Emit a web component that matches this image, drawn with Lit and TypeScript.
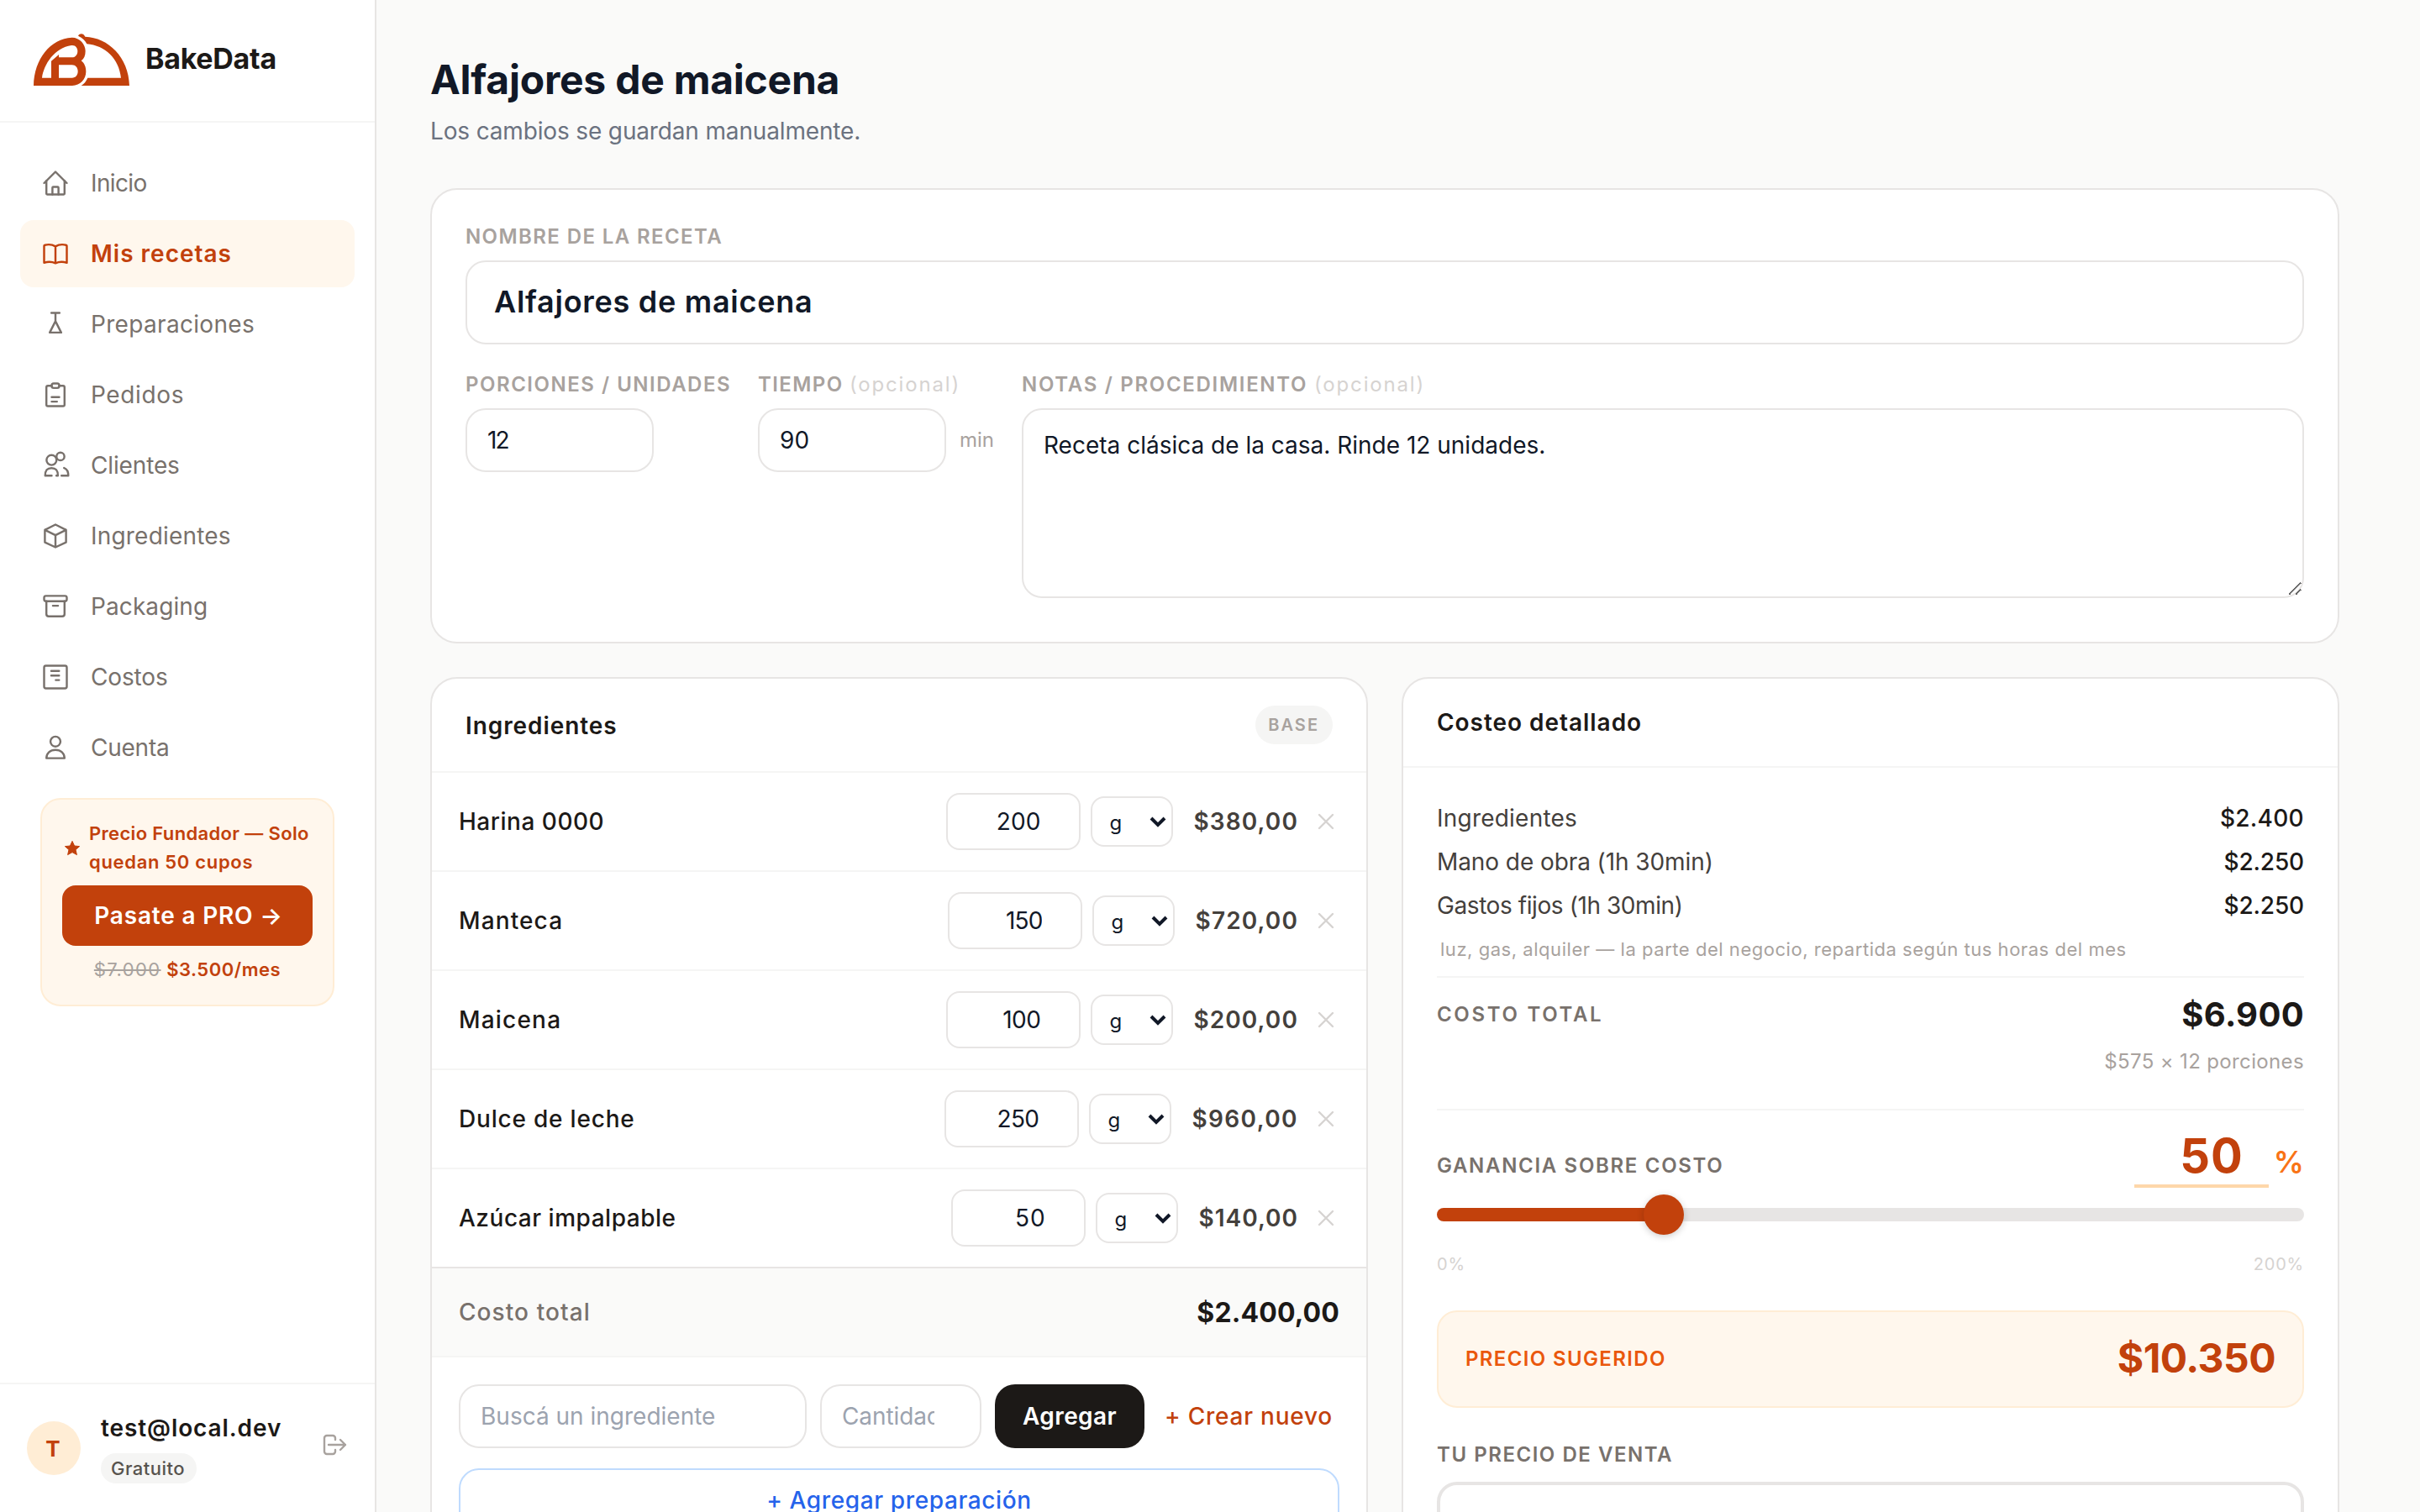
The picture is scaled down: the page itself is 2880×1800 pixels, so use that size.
import { LitElement, html, css, svg } from "lit";
import { customElement } from "lit/decorators.js";

const icons: Record<string, unknown> = {
  home: svg`<path d="M2.5 10 10 2.5l7.5 7.5"/><path d="M4 8.5V17a.5.5 0 0 0 .5.5h11a.5.5 0 0 0 .5-.5V8.5"/><path d="M8 17.5V13a.5.5 0 0 1 .5-.5h3a.5.5 0 0 1 .5.5v4.500"/>`,
  book: svg`<path d="M10 5.200C8 4 5 3.800 3 4.300a.6.6 0 0 0-.5.6V16c2.500-.8 5.500-.6 7.500.3 2-.9 5-1.100 7.500-.3V4.900a.6.6 0 0 0-.5-.6c-2-.5-5-.3-7 .9zM10 5.200v11"/>`,
  flask: svg`<path d="M7.300 2.500h5.400M10 2.500V8M10 8l-3.800 7.500h7.600z"/>`,
  clipboard: svg`<path d="M7.500 4H5a1 1 0 0 0-1 1v11.500a1 1 0 0 0 1 1h10a1 1 0 0 0 1-1V5a1 1 0 0 0-1-1h-2.500"/><rect x="7.500" y="2.500" width="5" height="3" rx="1.300"/><path d="M7.500 11.500h5M7.500 14.500h3.500"/>`,
  users: svg`<circle cx="7.400" cy="6.500" r="3.300"/><circle cx="13.300" cy="4.100" r="2.600"/><path d="M7.500 16.800H3.200c0-3.500 1-5 4.200-5s4.200 1.500 4.200 5h-1M15.700 11.700c1.800.6 2.800 2 2.800 5.100h-4.500"/>`,
  box: svg`<path d="m10 2.500 7 3.500v8.200l-7 3.300-7-3.300V6zM3 6l7 3.500L17 6M10 9.500v8"/>`,
  archive: svg`<rect x="2.500" y="3" width="15" height="3.500" rx="1.200"/><path d="M4 6.500V15a1.500 1.500 0 0 0 1.500 1.500h9A1.500 1.500 0 0 0 16 15V6.500M8.300 9.500h3.400"/>`,
  costs: svg`<rect x="2.500" y="2.500" width="15" height="15" rx="1.200"/><path d="M7.200 6h5.200M7.200 9h5.200M10.200 12h2.200"/>`,
  user: svg`<circle cx="10" cy="6" r="3.300"/><path d="M4 17c.1-3.300 2.500-5.500 6-5.500s5.900 2.200 6 5.500z"/>`,
};

/* The last value of each entry is the letter spacing in px. */
const nav: [string, string, number][] = [
  ["home", "Inicio", -0.32],
  ["book", "Mis recetas", 0.5],
  ["flask", "Preparaciones", 0.16],
  ["clipboard", "Pedidos", 0.32],
  ["users", "Clientes", -0.07],
  ["box", "Ingredientes", 0.1],
  ["archive", "Packaging", 0.05],
  ["costs", "Costos", -0.07],
  ["user", "Cuenta", -0.12],
];

const rows: [string, number, string, number, string, number][] = [
  ["Harina 0000", 0.26, "200", 0.07, "$380,00", 0.55],
  ["Manteca", 0.56, "150", -0.4, "$720,00", 0.56],
  ["Maicena", 0.6, "100", -0.25, "$200,00", 0.55],
  ["Dulce de leche", 0.4, "250", -0.3, "$960,00", 0.7],
  ["Azúcar impalpable", 0.26, "50", 0.45, "$140,00", 0.5],
];

const costs: [string, number, string, number][] = [
  ["Ingredientes", 0.11, "$2.400", 0.14],
  ["Mano de obra (1h 30min)", -0.04, "$2.250", -0.08],
  ["Gastos fijos (1h 30min)", -0.21, "$2.250", -0.08],
];

const sp = (n: number) => `letter-spacing:${n}px`;

@customElement("app-root")
export class AppRoot extends LitElement {
  static styles = css`
    :host { display: block; width: 2880px; height: 1800px; overflow: hidden; background: #fafaf9; }
    * { box-sizing: border-box; }
    input, select, textarea, button { font-family: inherit; font-size: 14px; color: #111827; margin: 0; outline: none; }
    .page { display: flex; width: 1440px; height: 900px; overflow: hidden; transform: scale(2); transform-origin: 0 0; font: 14px/20px Inter, sans-serif; color: #1c1917; background: #fafaf9; }

    .side { width: 224px; height: 900px; flex: none; display: flex; flex-direction: column; background: #fff; border-right: 1px solid #e7e5e4; }
    .brand { height: 73px; flex: none; display: flex; align-items: flex-start; gap: 9.5px; padding: 20px; border-bottom: 1px solid #f5f5f4; }
    .brand svg { display: block; width: 57px; height: 31px; }
    .brand-name { font-size: 17px; font-weight: 700; line-height: 30px; letter-spacing: -0.14px; }
    .nav { flex: 1; padding: 16px 12px; display: flex; flex-direction: column; gap: 2px; }
    .item { height: 40px; flex: none; display: flex; align-items: center; gap: 12px; padding: 0 12px; border-radius: 8px; color: #78716c; }
    .item.on { background: #fff7ed; color: #c2410c; font-weight: 600; }
    .ico { width: 18px; height: 18px; flex: none; fill: none; stroke: currentColor; stroke-width: 1.35; stroke-linecap: round; stroke-linejoin: round; }
    .promo { margin: 8px 12px 0; padding: 12px; border: 1px solid #ffedd5; border-radius: 12px; background: #fff7ed; font-size: 11px; line-height: 16.5px; color: #c2410c; font-weight: 600; }
    .promo-top { display: flex; align-items: center; gap: 4px; margin-bottom: 6px; white-space: nowrap; }
    .promo-top svg { width: 12px; height: 12px; flex: none; fill: #c2410c; stroke: #c2410c; stroke-width: 0.5; stroke-linejoin: round; }
    .promo-a { letter-spacing: 0.17px; }
    .promo-b { letter-spacing: 0.34px; }
    .promo-btn { height: 36px; padding-left: 1.5px; border-radius: 8px; background: #c2410c; color: #fff; font-size: 14px; line-height: 36px; text-align: center; letter-spacing: 0.4px; margin-bottom: 6px; }
    .promo-price { text-align: center; letter-spacing: 0.26px; }
    .old { color: #a8a29e; font-weight: 400; text-decoration: line-through; letter-spacing: 0.7px; margin-right: 0.3px; }
    .user { height: 77px; flex: none; border-top: 1px solid #f5f5f4; padding: 16px; display: flex; gap: 12px; align-items: flex-start; }
    .avatar { width: 32px; height: 32px; margin-top: 6px; padding-right: 1px; border-radius: 50%; background: #ffedd5; color: #c2410c; font-size: 13px; font-weight: 700; line-height: 32px; text-align: center; }
    .who { flex: 1; }
    .mail { font-weight: 600; line-height: 20px; height: 21px; margin-bottom: 4px; letter-spacing: 0.45px; }
    .plan { display: block; width: 57px; padding: 0 6px; height: 18px; border-radius: 9px; background: #f5f5f4; color: #57534e; font-size: 11px; line-height: 18px; font-weight: 500; letter-spacing: 0.24px; }
    .out { width: 16px; height: 16px; margin-top: 12px; color: #a8a29e; fill: none; stroke: currentColor; stroke-width: 1.2; stroke-linecap: round; stroke-linejoin: round; }

    .main { width: 1200px; padding: 32px; flex: none; }
    h1 { margin: 0 0 4px; font-size: 24px; line-height: 32px; font-weight: 700; color: #111827; letter-spacing: -0.12px; }
    .sub { color: #6b7280; margin-bottom: 24px; letter-spacing: -0.076px; }
    .card { background: #fff; border: 1px solid #e7e5e4; border-radius: 16px; }
    .recipe { height: 271px; padding: 20px; margin-bottom: 20px; }
    .label { display: block; font-size: 12px; line-height: 16px; font-weight: 600; letter-spacing: 0.7px; color: #a8a29e; white-space: nowrap; margin-bottom: 6px; }
    .label span { font-weight: 400; color: #d6d3d1; letter-spacing: 0.92px; }
    .label.portions { letter-spacing: 0.76px; }
    .label.notes { letter-spacing: 0.85px; }
    .field { display: block; height: 38px; padding: 0 12px 1px; border: 1px solid #e7e5e4; border-radius: 12px; background: #fff; line-height: 20px; }
    .field::placeholder { color: #9ca3af; opacity: 1; }
    .name { width: 100%; height: 50px; padding: 0 16px 2px; font-size: 18px; font-weight: 600; margin-bottom: 16px; letter-spacing: 0.36px; }
    .trio { display: flex; gap: 16px; }
    .c1 { width: 158px; }
    .c2 { width: 141px; }
    .short { width: 112px; }
    .portions-in { letter-spacing: -1px; }
    .with-unit { display: flex; align-items: center; gap: 8px; font-size: 12px; color: #a8a29e; }
    .with-unit .field { letter-spacing: 0.1px; flex: none; }
    .grow { flex: 1; min-width: 0; }
    textarea.field { width: 100%; height: 113px; padding: 10px 12px; line-height: 22.75px; resize: vertical; letter-spacing: 0; }

    .cols { display: grid; grid-template-columns: 558px 558px; gap: 20px; }
    .ing, .cost { height: 560px; }
    .ing-head { height: 55.5px; padding: 16px 20px; display: flex; justify-content: space-between; align-items: center; border-bottom: 1px solid #f5f5f4; font-weight: 600; letter-spacing: 0.46px; }
    .ing-title { padding-top: 1px; }
    .tag { height: 22.5px; padding: 0 8px; border-radius: 12px; background: #f5f5f4; color: #a8a29e; font-size: 10px; line-height: 23px; font-weight: 600; letter-spacing: 1px; }
    .row { height: 59px; padding: 0 17px 0 16px; display: flex; align-items: center; border-bottom: 1px solid #f5f5f4; font-weight: 500; }
    .row.last { height: 58px; border-bottom: 0; }
    .qty { width: 80px; height: 34px; padding: 0 8px; border-radius: 8px; text-align: right; margin-right: 6px; }
    .unit { width: 49px; height: 30px; border: 1px solid #e7e5e4; border-radius: 8px; background: #fff; font-size: 12px; padding: 0 4px 0 6px; margin: 1px 12px 0 0; }
    .price { font-weight: 600; color: #44403c; margin-right: 9.5px; }
    .x { width: 14px; height: 14px; fill: none; stroke: #d6d3d1; stroke-width: 1.2; stroke-linecap: round; }
    .total { height: 54px; padding: 0 16px; display: flex; justify-content: space-between; align-items: center; background: #fafaf9; border-top: 1px solid #e7e5e4; border-bottom: 1px solid #f5f5f4; }
    .total-l { color: #78716c; font-weight: 500; letter-spacing: 0.54px; }
    .total-v { font-size: 16px; line-height: 24px; font-weight: 700; letter-spacing: 0.06px; }
    .add { padding: 16px; }
    .add-row { display: flex; gap: 8px; margin-bottom: 12px; }
    .search { letter-spacing: 0; }
    .cant { width: 96px; letter-spacing: -0.05px; }
    .btn-add { height: 38px; width: 89px; border: 0; border-radius: 12px; background: #1c1917; color: #fff; font-weight: 600; padding: 0; letter-spacing: 0.2px; }
    .btn-new { width: 108px; text-align: center; line-height: 38px; color: #c2410c; font-weight: 500; white-space: nowrap; letter-spacing: 0.38px; }
    .btn-prep { display: block; width: 100%; height: 38px; border: 1px solid #bfdbfe; border-radius: 12px; background: #fff; color: #2563eb; font-weight: 500; letter-spacing: 0.31px; }

    .cost-head { height: 53px; padding: 16px 20px; border-bottom: 1px solid #f5f5f4; font-weight: 600; letter-spacing: 0.48px; }
    .cost-body { padding: 20px; }
    .line { display: flex; justify-content: space-between; color: #44403c; margin-bottom: 6px; }
    .line b { color: #1c1917; font-weight: 500; }
    .hint { font-size: 11px; line-height: 16.5px; color: #a8a29e; padding: 2px 0 7.5px 2px; border-bottom: 1px solid #f5f5f4; letter-spacing: 0.268px; white-space: nowrap; }
    .cap { font-size: 12px; line-height: 16px; font-weight: 600; letter-spacing: 0.68px; color: #78716c; }
    .cap.ct { letter-spacing: 1.34px; }
    .cap.gc { letter-spacing: 0.84px; }
    .cap.pv { letter-spacing: 0.77px; }
    .sum { display: flex; justify-content: space-between; align-items: center; padding-top: 8px; }
    .sum b { font-size: 20px; line-height: 28px; font-weight: 700; letter-spacing: 0.16px; }
    .per { font-size: 12px; line-height: 16px; color: #a8a29e; text-align: right; padding: 6px 0 20px; border-bottom: 1px solid #f5f5f4; height: 43px; letter-spacing: 0.18px; }
    .gain { display: flex; justify-content: space-between; align-items: baseline; padding-top: 10px; height: 46px; }
    .gain-r { display: flex; align-items: baseline; gap: 3px; font-size: 18px; line-height: 34px; font-weight: 600; color: #f97316; }
    .pct { width: 80px; height: 36px; padding: 0 0 1px; border: 0; border-bottom: 2px solid #fed7aa; background: transparent; text-align: right; font-size: 28px; font-weight: 700; color: #c2410c; letter-spacing: 0.5px; }
    .range { display: block; width: 100%; height: 8px; margin-top: 12px; border-radius: 4px; appearance: none; -webkit-appearance: none; background: linear-gradient(to right, #c2410c 25%, #e7e5e4 25%); }
    .range::-webkit-slider-thumb { -webkit-appearance: none; width: 24px; height: 24px; border-radius: 50%; background: #c2410c; box-shadow: 0 1px 4px rgba(0, 0, 0, 0.2); }
    .ends { display: flex; justify-content: space-between; margin-top: 17.5px; font-size: 10px; line-height: 15px; color: #d6d3d1; letter-spacing: 0.4px; }
    .sug { height: 58px; margin: 20px 0; padding: 0 16px; display: flex; align-items: center; justify-content: space-between; border: 1px solid #ffedd5; border-radius: 12px; background: #fff7ed; }
    .sug .cap { color: #ea580c; }
    .sug b { font-size: 24px; line-height: 32px; color: #c2410c; letter-spacing: -0.28px; }
    .sell { height: 60px; margin-top: 8px; border: 2px solid #e7e5e4; border-radius: 12px; }
  `;

  private icon(name: string) {
    return html`<svg class="ico" viewBox="0 0 20 20">${icons[name]}</svg>`;
  }

  render() {
    return html`<div class="page">
      <aside class="side">
        <div class="brand">
          <svg viewBox="0 0 342 186" fill="#c2410c" fill-rule="evenodd">
            <path d="M0 186C2 90 60 18 137 14c28 0 48 24 48 48 0 16-5 28-15 35 12 9 17 23 17 39 0 27-21 50-49 50zM30 158h33V98l27-23v10h47c11 0 20-9 20-23 0-10-7-22-22-20C75 50 36 110 30 158zM90 112v46h47c13 0 21-10 21-23s-8-23-21-23z"/>
            <path d="M159 8C165-2 178-2 184 11 266 14 340 84 342 186H170c10-6 18-16 23-28h119C305 90 255 42 190 37 184 25 175 15 159 8z"/>
          </svg>
          <div class="brand-name">BakeData</div>
        </div>
        <nav class="nav">
          ${nav.map(([i, t, s]) => html`<div class="item ${t === "Mis recetas" ? "on" : ""}">${this.icon(i)}<span style=${sp(s)}>${t}</span></div>`)}
          <div class="promo">
            <div class="promo-top">
              <svg viewBox="0 0 12 12"><path d="m6 1.700 1.300 2.800 3 .3-2.300 2 .7 3L6 8.300 3.300 9.800l.7-3-2.300-2 3-.3z"/></svg>
              <div><div class="promo-a">Precio Fundador — Solo</div><div class="promo-b">quedan 50 cupos</div></div>
            </div>
            <div class="promo-btn">Pasate a PRO →</div>
            <div class="promo-price"><span class="old">$7.000</span> $3.500/mes</div>
          </div>
        </nav>
        <div class="user">
          <div class="avatar">T</div>
          <div class="who"><div class="mail">test@local.dev</div><span class="plan">Gratuito</span></div>
          <svg class="out" viewBox="0 0 16 16"><path d="M8.500 5V4A1.500 1.500 0 0 0 7 2.500H3.500A1.500 1.500 0 0 0 2 4v8a1.500 1.500 0 0 0 1.500 1.500H7A1.500 1.500 0 0 0 8.500 12v-1M4.500 8h10M11.500 5l3 3-3 3"/></svg>
        </div>
      </aside>
      <main class="main">
        <h1>Alfajores de maicena</h1>
        <div class="sub">Los cambios se guardan manualmente.</div>
        <section class="card recipe">
          <label class="label">NOMBRE DE LA RECETA</label>
          <input class="field name" .value=${"Alfajores de maicena"} />
          <div class="trio">
            <div class="c1"><label class="label portions">PORCIONES / UNIDADES</label><input class="field short portions-in" type="number" .value=${"12"} /></div>
            <div class="c2"><label class="label">TIEMPO <span>(opcional)</span></label>
              <div class="with-unit"><input class="field short" type="number" .value=${"90"} />min</div></div>
            <div class="grow"><label class="label notes">NOTAS / PROCEDIMIENTO <span>(opcional)</span></label>
              <textarea class="field" .value=${"Receta clásica de la casa. Rinde 12 unidades."}></textarea></div>
          </div>
        </section>
        <div class="cols">
          <section class="card ing">
            <div class="ing-head"><span class="ing-title">Ingredientes</span><span class="tag">BASE</span></div>
            ${rows.map(([n, ns, q, qs, p, ps], i) => html`<div class="row ${i === rows.length - 1 ? "last" : ""}">
              <span class="grow" style=${sp(ns)}>${n}</span>
              <input class="field qty" type="number" style=${sp(qs)} .value=${q} />
              <select class="unit"><option>g</option></select>
              <span class="price" style=${sp(ps)}>${p}</span>
              <svg class="x" viewBox="0 0 14 14"><path d="m3 3 8 8M11 3l-8 8"/></svg>
            </div>`)}
            <div class="total"><span class="total-l">Costo total</span><span class="total-v">$2.400,00</span></div>
            <div class="add">
              <div class="add-row">
                <input class="field grow search" placeholder="Buscá un ingrediente" />
                <input class="field cant" type="number" placeholder="Cantidad" />
                <button class="btn-add">Agregar</button>
                <span class="btn-new">+ Crear nuevo</span>
              </div>
              <button class="btn-prep">+ Agregar preparación</button>
            </div>
          </section>
          <section class="card cost">
            <div class="cost-head">Costeo detallado</div>
            <div class="cost-body">
              ${costs.map(([l, ls, v, vs]) => html`<div class="line"><span style=${sp(ls)}>${l}</span><b style=${sp(vs)}>${v}</b></div>`)}
              <div class="hint">luz, gas, alquiler — la parte del negocio, repartida según tus horas del mes</div>
              <div class="sum"><span class="cap ct">COSTO TOTAL</span><b>$6.900</b></div>
              <div class="per">$575 × 12 porciones</div>
              <div class="gain"><span class="cap gc">GANANCIA SOBRE COSTO</span>
                <span class="gain-r"><input class="pct" type="number" .value=${"50"} />%</span></div>
              <input class="range" type="range" min="0" max="200" .value=${"50"} />
              <div class="ends"><span>0%</span><span>200%</span></div>
              <div class="sug"><span class="cap">PRECIO SUGERIDO</span><b>$10.350</b></div>
              <div class="cap pv">TU PRECIO DE VENTA</div>
              <div class="sell"></div>
            </div>
          </section>
        </div>
      </main>
    </div>`;
  }
}
